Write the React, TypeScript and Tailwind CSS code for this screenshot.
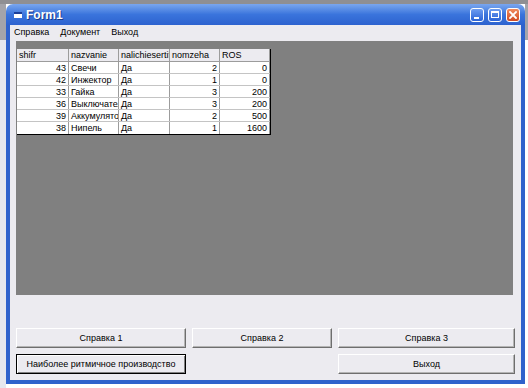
import { ReactNode } from 'react';

interface Row {
  shifr: number;
  nazvanie: string;
  nalichie: string;
  nomzeha: number;
  ros: number;
}

const rows: Row[] = [
  { shifr: 43, nazvanie: 'Свечи', nalichie: 'Да', nomzeha: 2, ros: 0 },
  { shifr: 42, nazvanie: 'Инжектор', nalichie: 'Да', nomzeha: 1, ros: 0 },
  { shifr: 33, nazvanie: 'Гайка', nalichie: 'Да', nomzeha: 3, ros: 200 },
  { shifr: 36, nazvanie: 'Выключатель', nalichie: 'Да', nomzeha: 3, ros: 200 },
  { shifr: 39, nazvanie: 'Аккумулятор', nalichie: 'Да', nomzeha: 2, ros: 500 },
  { shifr: 38, nazvanie: 'Нипель', nalichie: 'Да', nomzeha: 1, ros: 1600 },
];

const cols = [
  { key: 'shifr', w: 'w-[52px]' },
  { key: 'nazvanie', w: 'w-[50px]' },
  { key: 'nalichiesertif', w: 'w-[51px]' },
  { key: 'nomzeha', w: 'w-[50px]' },
  { key: 'ROS', w: 'w-[50px]' },
];

const Cell = ({ w, right, children }: { w: string; right?: boolean; children: ReactNode }) => (
  <div
    className={`${w} h-full shrink-0 overflow-hidden whitespace-nowrap border-r border-[#9c9c9c] px-[2px] leading-[12px] ${
      right ? 'text-right' : 'text-left'
    }`}
  >
    {children}
  </div>
);

const WinButton = ({ w, focused, children }: { w: string; focused?: boolean; children: ReactNode }) => (
  <button
    className={`${w} block shrink-0 h-[20px] bg-[#ecebf0] text-[9px] text-black leading-none ${
      focused
        ? 'border border-black shadow-[inset_1px_1px_0_#ffffff,inset_-1px_-1px_0_#808080]'
        : 'border border-t-white border-l-white border-r-[#6e6e6e] border-b-[#6e6e6e] shadow-[inset_-1px_-1px_0_#b4b4b4]'
    }`}
  >
    {children}
  </button>
);

const TitleButtons = () => (
  <div className="flex items-center gap-[4px] pr-[5px]">
    <div className="relative w-[14px] h-[14px] rounded-[3px] border border-white bg-gradient-to-b from-[#6d9cf0] to-[#2a62d6]">
      <div className="absolute left-[3px] bottom-[2px] w-[5px] h-[2px] bg-white" />
    </div>
    <div className="w-[14px] h-[14px] rounded-[3px] border border-white bg-gradient-to-b from-[#6d9cf0] to-[#2a62d6] flex items-center justify-center">
      <div className="w-[8px] h-[7px] border border-white border-t-2" />
    </div>
    <div className="w-[14px] h-[14px] rounded-[3px] border border-white bg-gradient-to-b from-[#f08a5c] to-[#d04a22] flex items-center justify-center">
      <svg width="8" height="8" viewBox="0 0 8 8">
        <path d="M1 1 L7 7 M7 1 L1 7" stroke="white" strokeWidth="1.8" strokeLinecap="square" />
      </svg>
    </div>
  </div>
);

export default function App() {
  return (
    <div className="w-[528px] h-[388px] overflow-hidden bg-white border-t-4 border-[#8f8f93] font-['Liberation_Sans',Arial,sans-serif]">
      <div className="flex h-full">
        <div className="w-[6px] shrink-0 flex flex-col">
          <div className="h-[36px] bg-[#a4a4aa]" />
          <div className="flex-1 bg-[#e6e7ee]" />
        </div>
        <div className="w-[519px] h-[380px] shrink-0 flex flex-col">
          {/* title bar */}
          <div className="h-[21px] shrink-0 rounded-t-[7px] bg-gradient-to-b from-[#7aa6ee] via-[#3a74dc] to-[#2d62cf] flex items-center justify-between">
            <div className="flex items-center pl-[8px] gap-[4px]">
              <div className="w-[8px] h-[6px] bg-white border-t-2 border-[#1b3f9a] mt-[1px]" />
              <span className="text-white text-[12px] font-bold [text-shadow:1px_1px_0_#1a3a8a]">
                Form1
              </span>
            </div>
            <TitleButtons />
          </div>

          {/* frame + body */}
          <div className="flex-1 border-x-4 border-b-4 border-[#2f62cc] bg-[#ecebf0] flex flex-col">
            <div className="h-[15px] flex items-center gap-[11px] pl-[4px] text-[9px] text-black">
              <span>Справка</span>
              <span>Документ</span>
              <span>Выход</span>
            </div>

            <div className="ml-[6px] mt-[1px] w-[497px] h-[254px] bg-[#808080]">
              <div className="ml-[1px] inline-flex flex-col bg-white text-[9px] text-black border-r border-b border-black">
                <div className="h-[13px] flex bg-[#ecebf0] border-b border-[#9c9c9c]">
                  {cols.map((c) => (
                    <Cell key={c.key} w={c.w}>
                      {c.key}
                    </Cell>
                  ))}
                </div>
                {rows.map((r) => (
                  <div key={r.shifr} className="h-[12px] flex border-b border-[#c4c4c4] last:border-b-0">
                    <Cell w="w-[52px]" right>
                      {r.shifr}
                    </Cell>
                    <Cell w="w-[50px]">{r.nazvanie}</Cell>
                    <Cell w="w-[51px]">{r.nalichie}</Cell>
                    <Cell w="w-[50px]" right>
                      {r.nomzeha}
                    </Cell>
                    <Cell w="w-[50px]" right>
                      {r.ros}
                    </Cell>
                  </div>
                ))}
              </div>
            </div>

            <div className="mt-[33px] ml-[6px] flex items-start gap-[6px]">
              <WinButton w="w-[170px]">Справка 1</WinButton>
              <WinButton w="w-[140px]">Справка 2</WinButton>
              <WinButton w="w-[177px]">Справка 3</WinButton>
            </div>
            <div className="mt-[6px] ml-[6px] flex items-start gap-[152px]">
              <WinButton w="w-[170px]" focused>
                Наиболее ритмичное производство
              </WinButton>
              <WinButton w="w-[177px]">Выход</WinButton>
            </div>
          </div>
        </div>
        <div className="flex-1 flex flex-col">
          <div className="h-[36px] bg-[#a4a4aa]" />
          <div className="flex-1 bg-white" />
        </div>
      </div>
    </div>
  );
}
